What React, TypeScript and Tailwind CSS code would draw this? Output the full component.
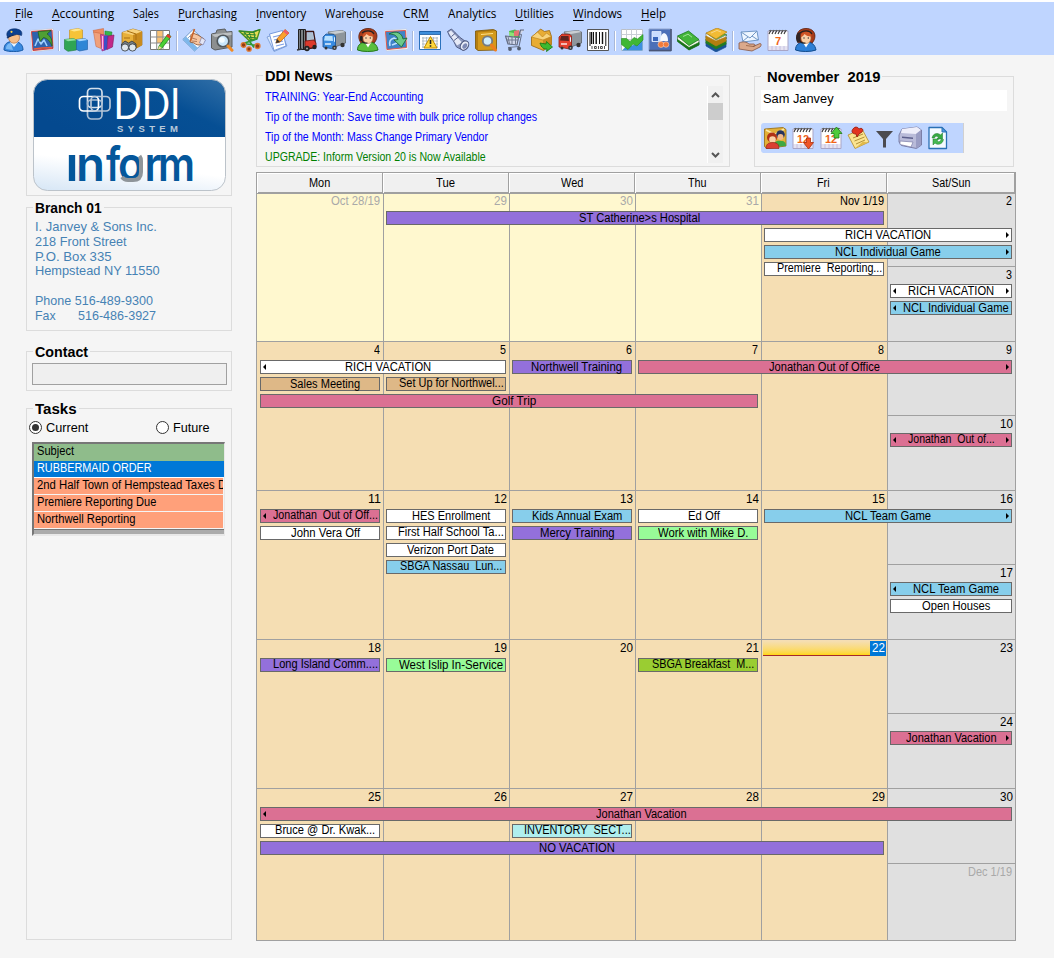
import React, { useLayoutEffect, useRef, useState } from 'react';

const SANS = "font-['Liberation_Sans',Arial,sans-serif]";

/** A single line of text condensed or stretched to a set width. */
function Fit({ w, children, className = '' }: { w: number; children: React.ReactNode; className?: string }) {
  const ref = useRef<HTMLSpanElement>(null);
  const [scale, setScale] = useState(1);
  useLayoutEffect(() => {
    const el = ref.current;
    if (el && el.offsetWidth) setScale(w / el.offsetWidth);
  }, [w]);
  return (
    <span className={`block shrink-0 ${className}`} style={{ width: w }}>
      <span ref={ref} className="inline-block origin-left whitespace-pre" style={{ transform: `scaleX(${scale})` }}>
        {children}
      </span>
    </span>
  );
}

/* ---------- icons ---------- */

function Svg({ children }: { children: React.ReactNode }) {
  return (
    <svg width="24" height="24" viewBox="0 0 24 24" className="block shrink-0" strokeLinejoin="round">
      {children}
    </svg>
  );
}

const Officer = () => (
  <Svg>
    <path d="M2 22c0-6 3-8.500 9-8.500s10 2.500 10 8.500c-4 2-14 2.300-19 0z" fill="#3b8ae0" stroke="#175aa8" />
    <path d="M4 21c0-4 2-5.500 5-6l2 7z" fill="#79b9f5" />
    <path d="M8 14l4 5 4-5z" fill="#e8f4ff" />
    <ellipse cx="12" cy="9.500" rx="5.500" ry="5.700" fill="#f7bd86" stroke="#b9713c" strokeWidth=".7" />
    <path d="M5.500 9C3.500 5 6 1 12 .8c6 0 9 2.700 7.500 6.700-5-2-9-1-14 1.500z" fill="#0d4190" stroke="#082c66" strokeWidth=".6" />
    <path d="M4.500 9.800c3-2.500 7-3.500 10-2.800-3 .5-6.500 1.500-9 3.500z" fill="#0a2a60" />
    <circle cx="9.500" cy="3.800" r="1.100" fill="#ffd24a" />
  </Svg>
);
const ChartBack = () => (
  <Svg>
    <path d="M0 2.500L23 .5l1 21L2 24z" fill="#fff" stroke="#bfc6d2" strokeWidth=".6" />
    <path d="M1.500 3.500L22 2l1 18.500L3 22.500z" fill="#2d62ae" stroke="#d7423e" strokeWidth="1" />
    <path d="M5 18l3-7 3 5 3-4 3 6" fill="none" stroke="#9ed0ff" strokeWidth="1.600" />
    <path d="M4 21l8-1 10-.5" stroke="#ef5a3a" strokeWidth="1.400" />
    <path d="M8 3.500l13-1-4 3.500c4 2.500 5.500 6 5 12-2-5-4.500-7.500-8.500-8.500l-3.500 4z" fill="#4f9f35" stroke="#23611a" strokeWidth=".8" />
  </Svg>
);
const Cubes = () => (
  <Svg>
    <path d="M5.500 2L14 .5 18.500 2v9.500l-8 1.500-5-1z" fill="#f6c338" stroke="#c28c15" strokeWidth=".6" />
    <path d="M5.500 2L14 .5 18.500 2l-8.500 1.500z" fill="#ffe68a" />
    <path d="M.5 11.500l9-1 3 1.800V22l-8.500 1.300L.5 21z" fill="#2fa554" stroke="#1c7838" strokeWidth=".6" />
    <path d="M.5 11.500l9-1 3 1.800-8.500 1z" fill="#8be0a0" />
    <path d="M12.500 11.500l8-1 3 1.500v9.500l-8 1.500-3-1.500z" fill="#2f86d6" stroke="#1b5ba3" strokeWidth=".6" />
    <path d="M12.500 11.500l8-1 3 1.500-8 1.300z" fill="#a5d6ff" />
  </Svg>
);
const Folders = () => (
  <Svg>
    <path d="M1 2.500l10.500-2 .5 6-8 2z" fill="#ee8d62" stroke="#c66038" strokeWidth=".5" />
    <path d="M1.500 4l7.500 1.500v15L4 18.500z" fill="#f0a07b" stroke="#c66038" strokeWidth=".5" />
    <path d="M13 3l7 1-1 8-6-2z" fill="#35b84a" stroke="#1d7a2d" strokeWidth=".5" />
    <path d="M8.500 6.500l7 1-1 14-4.500 1.500z" fill="#d94fa8" stroke="#8f2072" strokeWidth=".6" />
    <path d="M12 8l4-.5L15 21l-3 1.500z" fill="#3a4fc7" />
    <path d="M16 8l6-1-1.500 12-5.500 2.500z" fill="#c22889" stroke="#7d1a5c" strokeWidth=".6" />
    <path d="M10.500 8v13" stroke="#ffb6e6" />
  </Svg>
);
const BoxBinoculars = () => (
  <Svg>
    <path d="M2 4.500l11-3.500 9 2.500V17l-9 5-11-5z" fill="#e8b03a" stroke="#9c6a12" strokeWidth=".7" />
    <path d="M2 4.500L13 1l9 2.500-9 3.500z" fill="#f7d27d" />
    <path d="M13 7l9-3.500V17l-9 5z" fill="#c98b1f" />
    <path d="M7 3l9 3V12M4 10h6" stroke="#a96f10" fill="none" />
    <g fill="#777f86" stroke="#2f3539" strokeWidth=".8">
      <path d="M1.500 16l3.500-3 3.500 2 3.500-2 4 3v4l-7 1-7.500-1z" />
      <circle cx="5" cy="19.500" r="3.600" fill="#dfe7ed" />
      <circle cx="12.500" cy="19.500" r="3.600" fill="#dfe7ed" />
    </g>
  </Svg>
);
const GridPencil = () => (
  <Svg>
    <path d="M2.500 2.500h19v19h-19z" fill="#fff" stroke="#777" />
    <path d="M9 3h6v12H9z" fill="#f8c277" />
    <path d="M2.500 9h19M2.500 15h19M8.700 2.500v19M15 2.500v19" stroke="#8d8d8d" />
    <path d="M20 6l3 2.500L14 20l-4 1.800L11 18z" fill="#4bcf35" stroke="#218015" strokeWidth=".8" />
    <path d="M20 6l3 2.500-1.500 2L18 8z" fill="#e33b2c" />
    <path d="M11 18l3 2-4 1.800z" fill="#f7d6a2" />
  </Svg>
);
const HandWriting = () => (
  <Svg>
    <path d="M.8 11.500L11 1.500 23 13 12.500 23z" fill="#fff" stroke="#6f98c8" />
    <path d="M.8 11.500L4 8.500l12 11.500-3.500 3z" fill="#7db7ea" />
    <path d="M6 10l2-2M8.500 13l2-2" stroke="#88a5c6" fill="none" />
    <path d="M9 10c-1-3 .5-5 3-4.500l4 1.500 6 4-2 5.500c-2.500 1-6 .5-8-1.500l-4-1z" fill="#f7c6a0" stroke="#8e5836" strokeWidth=".9" />
    <path d="M10 10l5 1.500M10 13l5 .5" stroke="#a3694a" strokeWidth=".8" />
    <path d="M12.500 1l-4 12" stroke="#c9652b" strokeWidth="1.600" />
    <path d="M19.500 9.500l4 2.500-2.500 5-3.500-2z" fill="#e3e6f5" stroke="#6d6f9c" strokeWidth=".6" />
  </Svg>
);
const CameraSearch = () => (
  <Svg>
    <path d="M1.500 6L6 5l1-3 8-1 1.500 3 5.500-.5V19L5 22l-3.500-2z" fill="#8c8f90" stroke="#5a5d5e" />
    <path d="M1.500 6.500l20-2.300V7L5 9z" fill="#bdc0c1" />
    <circle cx="13" cy="13" r="5.800" fill="#c9e6fb" stroke="#50575c" strokeWidth="1.600" />
    <circle cx="12" cy="12" r="2.800" fill="#f3fbff" />
    <path d="M18 18l4 4.200" stroke="#f08b25" strokeWidth="3" strokeLinecap="round" />
  </Svg>
);
const TrolleyGreen = () => (
  <Svg>
    <path d="M1 3l13 1 8-2.500L19 11l-8 1.500z" fill="#e5dc55" stroke="#4f8f1d" strokeWidth="1.300" />
    <path d="M1 3l13 1.500 8-3M4 6l14 1M7 9l12 1M6 4l7 8M11 4l3 8M16 4l1 7" fill="none" stroke="#2e8730" strokeWidth="1.200" />
    <path d="M19 11L5 15.500l15 2M11 12.500l5 7" fill="none" stroke="#2f9a34" strokeWidth="1.600" />
    <g fill="#8f3b16" stroke="#e07a34" strokeWidth="1.300">
      <circle cx="5.500" cy="17" r="2.300" />
      <circle cx="11" cy="21" r="2.200" />
      <circle cx="19.500" cy="18" r="2.500" />
    </g>
  </Svg>
);
const PaperPencil = () => (
  <Svg>
    <path d="M1 9l14-5 6 14-13 5.500z" fill="#dceafd" stroke="#7497d2" strokeWidth=".8" />
    <path d="M3.500 6l13-3.500L20 18 8 22.500z" fill="#fff" stroke="#6a90d8" strokeWidth=".9" />
    <path d="M7 9l8-2M8 12l8-2M9 15l8-2M10 18l8-2" stroke="#7c9de4" strokeWidth="1.200" />
    <path d="M19 1.500L23 5l-9 9-4 1 1-4z" fill="#f9a12c" stroke="#b45d0f" strokeWidth=".7" />
    <path d="M19 1.500L23 5l-1.800 2-4-3.500z" fill="#ee5c66" />
    <path d="M11 11l3 3-4 1z" fill="#333" />
  </Svg>
);
const Forklift = () => (
  <Svg>
    <path d="M4.500 1.500h7v20h-7z" fill="#8b9095" stroke="#222" />
    <path d="M6.500 2v20M9.500 2v20" stroke="#1b1b1b" strokeWidth="1.300" />
    <path d="M12 3.500h7.500l1.500 9v7l-9 1.500z" fill="none" stroke="#3a1512" strokeWidth="1.400" />
    <path d="M13 5h5.500l1.500 7-7 1z" fill="#aebfd0" />
    <path d="M11 13l9-1 2 3v4l-11 2z" fill="#dc3a2c" stroke="#6b120d" strokeWidth=".8" />
    <circle cx="13" cy="20.500" r="2.700" fill="#222" />
    <circle cx="13" cy="20.500" r="1" fill="#aaa" />
    <circle cx="20.500" cy="19" r="2.200" fill="#222" />
    <path d="M3 22l5-1" stroke="#333" strokeWidth="1.500" />
  </Svg>
);
function Truck({ main, dark, light }: { main: string; dark: string; light: string }) {
  return (
    <Svg>
      <path d="M6 4l14-1.500L23.500 4v11L13 19z" fill="#8e959b" stroke="#5c6267" strokeWidth=".8" />
      <path d="M6 4l14-1.500L23.500 4 13 6z" fill="#c9ced2" />
      <path d="M1 9l3-3 8 .5 1.500 1.500v12l-3 .8L1 19z" fill={main} stroke={dark} strokeWidth=".8" />
      <path d="M3 8h7.500l.5 5-9-.5z" fill={light} />
      <path d="M12 9l1 .5v4l-1 .5z" fill="#dff1ff" />
      <path d="M3 16h6" stroke="#fff" strokeWidth="1.300" />
      <circle cx="12.500" cy="19.800" r="2.300" fill="#333" />
      <circle cx="20.500" cy="17" r="2.200" fill="#333" />
      <circle cx="12.500" cy="19.800" r=".9" fill="#aaa" />
      <circle cx="4" cy="20" r="1.500" fill="#333" />
    </Svg>
  );
}
function Agent({ body, dark, phone }: { body: string; dark: string; phone?: boolean }) {
  return (
    <Svg>
      <path d="M5 15C1 10 2 .5 12 .5s11 9.500 6 14.500z" fill="#a83c1a" stroke="#5c1c08" strokeWidth=".8" />
      <path d="M1.500 22c0-5 3-8 10-8s9.500 3 10.500 8c-5 2-15.500 2-20.500 0z" fill={body} stroke={dark} />
      <path d="M8.500 14l3.500 5.500 3.500-5.500z" fill="#fff" />
      <ellipse cx="12" cy="10" rx="5" ry="5.500" fill="#fad0a7" stroke="#a96a3c" strokeWidth=".5" />
      <path d="M6.500 9c0-4 4-5 6-5.500 3 .5 5 2 5 5-4 0-6-1.500-7-2.500-1 2-2.500 3-4 3z" fill="#cf5526" />
      {phone ? (
        <path d="M3.500 5l3-1v9l-3 2c-2-3-2-7 0-10z" fill="#302424" />
      ) : (
        <rect x="4" y="8" width="2.600" height="5" rx="1" fill="#222" />
      )}
      <path d="M5.500 12c1 3 3 3.500 6 3M6 5c3-3 10-3 12 1" fill="none" stroke="#222" strokeWidth="1.100" />
      <circle cx="10" cy="10" r=".7" fill="#333" />
      <circle cx="14.300" cy="10" r=".7" fill="#333" />
    </Svg>
  );
}
const PictureArrow = () => (
  <Svg>
    <path d="M.5 2.500L22.500 1 24 21 2.500 23z" fill="#fff" stroke="#c8ccd5" strokeWidth=".6" />
    <path d="M1.500 3.500l20-1 1 17L3 21.500z" fill="#3f83c8" stroke="#e2574c" />
    <path d="M6 18c-1-4 0-7 4-8l3 2M8 17l5-2" stroke="#bde1ff" fill="none" strokeWidth="1.600" />
    <path d="M5 6c7-4 13-1 14 5l4-1-5.500 9L10 12l4-.5C13 7 9 6 5 6z" fill="#6cc98a" stroke="#1d6a35" strokeWidth=".9" />
  </Svg>
);
const CalendarWarn = () => (
  <Svg>
    <path d="M1.500 3.500h21v18h-21z" fill="#fff" stroke="#2b72bd" />
    <path d="M1.500 3.500h21v3h-21z" fill="#3e8edb" stroke="#1d5b9f" strokeWidth=".8" />
    <path d="M4 10h16M4 13h16M4 16h16M4 19h16M5 9v11M8.500 9v11M12 9v11M15.500 9v11M19 9v11" stroke="#9aa7b3" strokeWidth=".7" />
    <path d="M12.500 8.500L19 20H6z" fill="#ffd83d" stroke="#bf8b00" />
    <path d="M12.500 12v4M12.500 17.200v1.500" stroke="#222" strokeWidth="1.600" />
  </Svg>
);
const Flashlight = () => (
  <Svg>
    <path d="M1.500 3.500l4-2.500 8 8 8 6-4 7.500-7-3.500-3-6-4-5z" fill="#8e9ac0" stroke="#4b557c" strokeWidth=".9" />
    <path d="M2.500 4.500l2.500-2 11 12-5 3z" fill="#e6eaf7" />
    <path d="M5.500 8.500l4-3.500M8 12.500l5-4" stroke="#56618c" />
    <ellipse cx="18.500" cy="17.500" rx="3.800" ry="5" transform="rotate(35 18.500 17.500)" fill="#e9edf8" stroke="#4d587f" strokeWidth="1.100" />
    <ellipse cx="18.800" cy="18" rx="2" ry="3" transform="rotate(35 18.800 18)" fill="#7d89b4" />
  </Svg>
);
const BookSearch = () => (
  <Svg>
    <path d="M1.500 3l18-1.500 3 1.500v19L4 22.500l-2.500-2z" fill="#b57e10" stroke="#7a5404" strokeWidth=".8" />
    <path d="M4 4.500L22 3v18.500L4 22z" fill="#d49a1d" />
    <path d="M7 6.500l12-1" stroke="#ffe08a" />
    <circle cx="13.500" cy="13" r="4.700" fill="#ccecff" stroke="#727b83" strokeWidth="1.800" />
    <path d="M17.500 17l4 5" stroke="#ef7f21" strokeWidth="3" strokeLinecap="round" />
  </Svg>
);
const Cart = () => (
  <Svg>
    <path d="M7 3l6-1.500L18 4v6H8z" fill="#51b852" />
    <path d="M12 3l5-1 1 6h-6z" fill="#e57373" />
    <path d="M7 4l5 1v5H8z" fill="#8de377" />
    <path d="M3.500 8l13 1.500L15 17l-9-1zM16.500 9.500L18.500 2H22" fill="#d3d7e6" fillOpacity=".85" stroke="#626b82" strokeWidth="1.200" />
    <path d="M6 8.500l1.500 7.500M10 9v8M13.500 9.500v7M4.500 12h12M6 19.500l11-1" stroke="#707a91" fill="none" />
    <path d="M17.500 6l2 .5-2.500 12" stroke="#626b82" fill="none" />
    <circle cx="8" cy="21" r="1.900" fill="#555e70" />
    <circle cx="17" cy="20.500" r="1.900" fill="#555e70" />
  </Svg>
);
const BoxArrow = () => (
  <Svg>
    <path d="M1.500 9l6-5 3-3 4 2.500 5-1 2 6v8l-8 6-12-5z" fill="#e8ac35" stroke="#99640d" strokeWidth=".8" />
    <path d="M1.500 9l11.500 3 8.500-3.500-5-3.500-4 4-5-5z" fill="#f8d37c" stroke="#b57c19" strokeWidth=".6" />
    <path d="M13 12v10.500l8.500-5.500V8.500z" fill="#c88a20" />
    <path d="M10 15l6 1 .5-2.500L22.500 19l-6 4.500.5-2.500c-3 .5-6-1.500-7-6z" fill="#3cb930" stroke="#167312" strokeWidth=".8" />
  </Svg>
);
const Barcode = () => (
  <Svg>
    <path d="M1.500 1.500h21v21h-21z" fill="#fff" stroke="#555" />
    <path d="M4 4v14M7.500 4v12M13.500 4v12M19.800 4v14" stroke="#111" strokeWidth="1" />
    <path d="M5.600 4v12M10.200 4v12M16.500 4v12" stroke="#111" strokeWidth="1.400" />
    <path d="M6 18v3M8.500 18.500h1.800v2H8.500zM12.500 18v3M14.500 18.500h1.800v2h-1.800zM18.500 18v3" stroke="#222" fill="none" strokeWidth=".8" />
  </Svg>
);
const AreaChart = () => (
  <Svg>
    <path d="M1.500 1.500h21v21h-21z" fill="#fff" stroke="#bbc0c8" />
    <path d="M1.500 6.500h21M1.500 11.500h21M6.500 1.500v15M11.500 1.500v15M16.500 1.500v15" stroke="#c9ced5" />
    <path d="M2 22.500l4-4 6-1 5-2 5.500-5v12z" fill="#3d8fe0" />
    <path d="M1.500 10.500h5l3.500 3 4-4 3.500 1.500L23 6.500V12l-6 6-4-2-5 5.500-6.500-5z" fill="#3fb735" stroke="#238c1e" strokeWidth=".6" />
  </Svg>
);
const PhotoTile = () => (
  <Svg>
    <path d="M1 1h22v22H1z" fill="#4c6fb8" stroke="#8ea3cc" />
    <path d="M1 22.500h22V1" fill="none" stroke="#4a5575" strokeWidth="1.600" />
    <path d="M4 3.500h9v10H4z" fill="#c9dcff" stroke="#e3ecff" strokeWidth=".8" />
    <path d="M5 9h5v4H5z" fill="#3a66bb" />
    <path d="M12.500 13c0-5 1-7 3.500-8 3 1 4 4 4 8z" fill="#f5f8ff" />
    <circle cx="13" cy="16.500" r="3" fill="#f0793a" stroke="#fbd3bd" strokeWidth=".6" />
    <circle cx="18" cy="16.500" r="2.800" fill="#f0793a" stroke="#fbd3bd" strokeWidth=".6" />
  </Svg>
);
function BookShape({ y, a, b }: { y: number; a: string; b: string }) {
  return (
    <g transform={`translate(0 ${y})`} strokeWidth=".7">
      <path d="M2 7v5l10 6 10-5V9L12 14z" fill="#f8f9ef" stroke="#7b7b68" />
      <path d="M2 10l10 5 10-4v4l-10 5-10-6z" fill={b} stroke={b} />
      <path d="M2 7l11-5 10 4-11 7z" fill={a} stroke={b} />
      <path d="M7 7l6-2.600 4 1.600" stroke="#fff" strokeOpacity=".6" fill="none" />
    </g>
  );
}
const GreenBook = () => (
  <Svg>
    <g strokeWidth=".8">
      <path d="M1.500 8.500v4L13 21.500l10-5v-4.500z" fill="#f4f6e8" stroke="#5f7a50" />
      <path d="M1.500 11.500L13 19.500l10-5v2.500L13 22 1.500 13.500z" fill="#187218" stroke="#187218" />
      <path d="M1.500 8L12.500 3 23 11.500 13 17.500z" fill="#43b53a" stroke="#1b7a1d" />
      <path d="M7 8.500l5-2.300 4 3" stroke="#b7eeb0" fill="none" />
    </g>
  </Svg>
);
const BookStack = () => (
  <Svg>
    <BookShape y={4} a="#3f8ad3" b="#1a5297" />
    <BookShape y={1} a="#5cb848" b="#237c22" />
    <BookShape y={-2} a="#f2bb35" b="#b57e10" />
  </Svg>
);
const MailHand = () => (
  <Svg>
    <path d="M3 4l16-1 1.500 9L5 14z" fill="#eef6ff" stroke="#7197c5" />
    <path d="M3 4l9 6 7-7M5 13l5-4M20 12l-6-4" fill="none" stroke="#7197c5" />
    <path d="M1 15c4-2 8-1 10 1h5c2 1 1 2.500-1 2.500l7-3c1.500 0 1.500 2 0 3.500l-8 4-13-2z" fill="#dba98b" stroke="#855744" strokeWidth=".8" />
    <path d="M8 17.500l7 1" stroke="#a46f50" />
  </Svg>
);
function CalPage({ arrow, text }: { arrow?: 'down' | 'up'; text: string }) {
  return (
    <Svg>
      <path d="M2 3h20v19.500H2z" fill="#fff" stroke="#a9a5c5" />
      <path d="M2 19h20M2 21h20M6 18v4M10 18v4M14 18v4M18 18v4" stroke="#bdb8dc" strokeWidth=".8" />
      <path d="M3 6l2-4M6 6l2-4M9 6l2-4M12 6l2-4M15 6l2-4M18 6l2-4" stroke="#333" strokeWidth="1.100" />
      <path d="M3 2.500h18" stroke="#666" strokeWidth=".8" />
      <text x="12" y="17" textAnchor="middle" className="font-['Liberation_Sans',sans-serif] text-[11px] font-bold" fill="#f06418">
        {text}
      </text>
      {arrow === 'down' && <path d="M15.500 12h4v4.500h3l-5 6.500-5-6.500h3z" fill="#ef5426" stroke="#a92e0d" strokeWidth=".8" />}
      {arrow === 'up' && <path d="M15 12h5V7.500h3L17.500 1 12 7.500h3z" fill="#4fcb3b" stroke="#1c7d15" strokeWidth=".8" />}
    </Svg>
  );
}
const People = () => (
  <Svg>
    <path d="M1.500 3L20 1.500l3 2V20L4 22.500l-2.500-2z" fill="#e2b13a" stroke="#94690e" strokeWidth=".8" />
    <path d="M3 4l9 4.500L21 3" fill="none" stroke="#fbe9a9" strokeWidth="1.600" />
    <circle cx="17.500" cy="8.500" r="4.300" fill="#26335e" />
    <circle cx="17.500" cy="11" r="3" fill="#f1b98a" />
    <path d="M10 21c0-4 3-7 8-6 4 0 5 2 5 5z" fill="#3fa842" />
    <circle cx="9" cy="11.500" r="5" fill="#b13216" />
    <circle cx="9.500" cy="13.500" r="3.300" fill="#fad1a6" />
    <path d="M3 22.500c0-4 2-6 7-6s6 3 6 6z" fill="#db3f32" stroke="#8c1d14" strokeWidth=".6" />
  </Svg>
);
const NotePin = () => (
  <Svg>
    <path d="M1 9l14-6 7 13-14 6.500z" fill="#fbe490" stroke="#b28c2b" strokeWidth=".8" />
    <path d="M6 12l10-4M7.500 15l10-4M9 18l9-4" stroke="#b09038" />
    <path d="M8 22.500l14-6.500-2 .5-4-1z" fill="#e1b94a" />
    <path d="M6 3c2-3 5-2 6 0 3-2 5 1 3 3l-3 2-2 3-1-3C5 8 4 5 6 3z" fill="#e23420" stroke="#8e160b" strokeWidth=".8" />
  </Svg>
);
const Funnel = () => (
  <svg width="19" height="24" viewBox="0 0 19 24" className="block shrink-0">
    <path d="M1 5h17l-7 8v8.500H8V13z" fill="#4b4b50" />
  </svg>
);
const Printer = () => (
  <Svg>
    <path d="M4 3l15-2 4.500 3v15l-5 3.500-15-3L1 16V9z" fill="#b9bbd9" stroke="#74769f" strokeWidth=".9" />
    <path d="M4 3l15-2 4 3-5 4-15-1z" fill="#eeeefa" />
    <path d="M18 8l5-4v15l-5 3.500z" fill="#9a9dc4" />
    <path d="M4 10.500l11 1v1.500L4 12z" fill="#5c5f8c" />
    <path d="M2 15l13 1-2 5-11-2.500z" fill="#fff" stroke="#7a7ca8" strokeWidth=".7" />
  </Svg>
);
const RefreshPage = () => (
  <Svg>
    <path d="M3 1.500h13l4.500 4.500v16.500H3z" fill="#f4faff" stroke="#2a70b5" strokeWidth="1.300" />
    <path d="M16 1.500V6h4.500z" fill="#4e9be0" stroke="#2a70b5" />
    <path d="M6 12c1-5 6-5.500 8.500-3L16.500 7v6H11l1.500-2C10.500 9.500 9 10 8.500 12z" fill="#37aa44" stroke="#1c7a2a" strokeWidth=".5" />
    <path d="M17.500 13.500c-1 5-6 6-8.500 3.500L7 19v-6h5.500L11 15c2 1.500 3.500.5 4-1.500z" fill="#45b952" stroke="#1c7a2a" strokeWidth=".5" />
  </Svg>
);

/* ---------- top bars ---------- */

const MENU: [string, string, string, number][] = [
  ['', 'F', 'ile', 18],
  ['', 'A', 'ccounting', 62],
  ['Sa', 'l', 'es', 26],
  ['', 'P', 'urchasing', 59],
  ['', 'I', 'nventory', 50],
  ['Wareh', 'o', 'use', 59],
  ['CR', 'M', '', 26],
  ['Analytics', '', '', 48],
  ['', 'U', 'tilities', 39],
  ['', 'W', 'indows', 49],
  ['', 'H', 'elp', 25],
];

const TOOLS: React.ReactNode[][] = [
  [<Officer />, <ChartBack />],
  [<Cubes />, <Folders />, <BoxBinoculars />, <GridPencil />],
  [<HandWriting />, <CameraSearch />, <TrolleyGreen />, <PaperPencil />, <Forklift />, <Truck main="#398be0" dark="#174f91" light="#b8e0ff" />],
  [<Agent body="#5abf3c" dark="#23761a" />, <PictureArrow />],
  [<CalendarWarn />, <Flashlight />, <BookSearch />, <Cart />, <BoxArrow />, <Truck main="#e5402c" dark="#8c1b10" light="#5d2320" />, <Barcode />],
  [<AreaChart />, <PhotoTile />, <GreenBook />, <BookStack />],
  [<MailHand />, <CalPage text="7" />, <Agent body="#2d7fd6" dark="#124b8c" phone />],
];

function TopBar() {
  return (
    <header className="mt-[2px] h-[53px] bg-[#bfd5ff]">
      <nav className="flex h-[24px] items-center gap-[19px] pl-[15px] font-['Open_Sans','Noto_Sans',sans-serif] text-[12px] leading-[24px] text-black">
        {MENU.map(([a, u, b, w]) => (
          <Fit key={a + u + b} w={w}>
            {a}
            <span className="underline decoration-1 underline-offset-2">{u}</span>
            {b}
          </Fit>
        ))}
      </nav>
      <div className="flex pl-[2px] pt-[2px]">
        {TOOLS.map((group, i) => (
          <div key={i} className="flex">
            {i > 0 && <div className="mr-[4px] mt-[3px] h-[20px] w-[2px] border-l border-[#a8b8d8] bg-white" />}
            {group.map((icon, j) => (
              <div key={j} className="w-[28px]">
                {icon}
              </div>
            ))}
          </div>
        ))}
      </div>
    </header>
  );
}

/* ---------- left column ---------- */

function Group({ title, w, className, children }: { title: string; w: number; className: string; children: React.ReactNode }) {
  return (
    <fieldset className={`min-w-0 border border-[#dcdcdc] ${className}`}>
      <legend className="ml-[6px] h-[15px] px-[2px] text-[14px] font-bold leading-[16px] text-black">
        <Fit w={w}>{title}</Fit>
      </legend>
      {children}
    </fieldset>
  );
}

/* letter, left edge, advance */
const WORDMARK: [string, number, number][] = [
  ['i', 32.5, 13],
  ['n', 43, 29],
  ['f', 73, 15],
  ['o', 85, 26],
  ['r', 111.500, 17],
  ['m', 125, 37],
];

function Logo() {
  return (
    <div className="flex h-[123px] w-[206px] border border-[#dcdcdc] pl-[6px] pt-[5px]">
      <svg width="194" height="113" viewBox="0 0 194 113" className="overflow-visible">
        <defs>
          <linearGradient id="navy" x1="0" y1="0.600" x2="1" y2="0">
            <stop offset="0" stopColor="#04498f" />
            <stop offset="0.600" stopColor="#064f94" />
            <stop offset="1" stopColor="#3270a8" />
          </linearGradient>
          <linearGradient id="frost" x1="0" y1="1" x2="0.250" y2="0.400">
            <stop offset="0" stopColor="#d3e4f5" />
            <stop offset="1" stopColor="#fff" />
          </linearGradient>
          <clipPath id="plate">
            <rect x="0.500" y="0.500" width="192" height="111" rx="14" />
          </clipPath>
        </defs>
        <g clipPath="url(#plate)">
          <rect width="194" height="58" fill="url(#navy)" />
          <rect y="58" width="194" height="56" fill="url(#frost)" />
        </g>
        <rect x="0.500" y="0.500" width="192" height="111" rx="14" fill="none" stroke="#bcc3ca" />
        <g fill="none" strokeWidth="1.700">
          <rect x="54.500" y="9.500" width="14.500" height="19" rx="4" stroke="#d3dfeb" />
          <rect x="54.500" y="21" width="14.500" height="19" rx="4" stroke="#a9bdd2" />
          <rect x="46.500" y="17.500" width="19" height="14.500" rx="4" stroke="#fff" />
          <rect x="58" y="17.500" width="19" height="14.500" rx="4" stroke="#b6c6d8" />
        </g>
        <text x="80.500" y="40" textLength="67" lengthAdjust="spacingAndGlyphs" className="font-['Lato',sans-serif] text-[43px] font-normal" fill="#fff">
          DDI
        </text>
        <text x="84" y="53" textLength="61" lengthAdjust="spacing" className="font-['Liberation_Sans',sans-serif] text-[9.500px] font-bold" fill="#b9c9da">
          SYSTEM
        </text>
        <text y="102" className="font-['Inter',sans-serif] text-[48px] font-semibold" fill="#04579b">
          {WORDMARK.map(([c, x, len]) => (
            <tspan key={c} x={x} textLength={len} lengthAdjust="spacingAndGlyphs">
              {c}
            </tspan>
          ))}
        </text>
        <rect x="33" y="60" width="11" height="14" fill="#fff" />
        <path d="M106.500 77q1.500 2 1.500 5v11q0 8-8 8h-5q-4 0-6-3" fill="none" stroke="#8f959a" strokeWidth="4" />
      </svg>
    </div>
  );
}

const ADDRESS: [string, number][] = [
  ['I. Janvey & Sons Inc.', 122],
  ['218 Front Street', 92],
  ['P.O. Box 335', 77],
  ['Hempstead NY 11550', 125],
  ['', 0],
  ['Phone 516-489-9300', 118],
];

function Radio({ on, label, w }: { on?: boolean; label: string; w: number }) {
  return (
    <label className="flex items-center gap-[4px] text-[13px] leading-[15px]">
      <span className="flex size-[13px] items-center justify-center rounded-full border border-[#333] bg-white">
        {on && <span className="size-[7px] rounded-full bg-[#333]" />}
      </span>
      <Fit w={w}>{label}</Fit>
    </label>
  );
}

const TASKS: [string, number][] = [
  ['2nd Half Town of Hempstead Taxes Due', 202],
  ['Premiere Reporting Due', 119],
  ['Northwell Reporting', 98],
];

function Sidebar() {
  return (
    <aside className="flex w-[206px] flex-col">
      <Logo />
      <Group title="Branch 01" w={67} className="mt-[4px] h-[131px]">
        <div className="pl-[8px] pt-[5px] text-[13.500px] leading-[14.800px] text-[#4682b4]">
          {ADDRESS.map(([t, w], i) => (
            <div key={i} className="h-[14.800px]">{t && <Fit w={w}>{t}</Fit>}</div>
          ))}
          <div className="flex">
            <Fit w={21} className="mr-[22px]">Fax</Fit>
            <Fit w={78}>516-486-3927</Fit>
          </div>
        </div>
      </Group>
      <Group title="Contact" w={53} className="mt-[13px] h-[47px]">
        <div className="ml-[5px] mt-[4px] h-[22px] w-[195px] border border-[#a0a0a0] bg-[#efefef]" />
      </Group>
      <Group title="Tasks" w={42} className="mt-[10px] h-[539px]">
        <div className="flex justify-between pl-[2px] pr-[21px] pt-[4px]">
          <Radio on label="Current" w={42} />
          <Radio label="Future" w={37} />
        </div>
        <div className="ml-[5px] mt-[7px] w-[193px] border-b-2 border-l-2 border-r border-t-2 border-b-[#e8e8e8] border-l-[#777] border-r-[#e8e8e8] border-t-[#777] text-[12px] leading-[15px] text-black">
          <div className="h-[17px] bg-[#8fbc8b] pl-[3px]"><Fit w={37}>Subject</Fit></div>
          <div className="h-[17px] border-b border-white bg-[#0078d7] pl-[3px] text-white"><Fit w={115}>RUBBERMAID ORDER</Fit></div>
          {TASKS.map(([t, w]) => (
            <div key={t} className="h-[17px] overflow-hidden border-b border-r border-[#f5f5f5] bg-[#ffa07a] pl-[3px]">
              <Fit w={w}>{t}</Fit>
            </div>
          ))}
          <div className="h-[5px] border-t border-[#777] bg-[#ababab]" />
        </div>
      </Group>
    </aside>
  );
}

/* ---------- news and month panels ---------- */

const NEWS: [string, number, string][] = [
  ['TRAINING: Year-End Accounting', 158, 'text-[#0000ff]'],
  ['Tip of the month: Save time with bulk price rollup changes', 272, 'text-[#0000ff]'],
  ['Tip of the Month: Mass Change Primary Vendor', 223, 'text-[#0000ff]'],
  ['UPGRADE: Inform Version 20 is Now Available', 221, 'text-[#008000]'],
];

function News() {
  return (
    <Group title="DDI News" w={68} className="h-[99px] w-[474px]">
      <div className="flex justify-between pl-[8px] pr-[6px]">
        <ul className="pt-[4px] text-[12px] leading-[20px]">
          {NEWS.map(([t, w, c]) => (
            <li key={t} className={`h-[20px] ${c}`}><Fit w={w}>{t}</Fit></li>
          ))}
        </ul>
        <div className="mt-[3px] flex h-[77px] w-[16px] flex-col items-center border-l border-white bg-[#f0f0f0]">
          <svg width="15" height="17" viewBox="0 0 15 17" fill="none" stroke="#555" strokeWidth="2"><path d="M4 11l3.500-3.500L11 11" /></svg>
          <div className="h-[17px] w-[15px] bg-[#cdcdcd]" />
          <div className="grow" />
          <svg width="15" height="17" viewBox="0 0 15 17" fill="none" stroke="#555" strokeWidth="2"><path d="M4 7l3.500 3.500L11 7" /></svg>
        </div>
      </div>
    </Group>
  );
}

function MonthPanel() {
  return (
    <Group title="November  2019" w={113} className="mt-px h-[98px] w-[260px] [&>legend]:ml-[6px] [&>legend]:pl-[6px]">
      <div className="ml-[6px] mt-[6px] h-[21px] w-[246px] bg-white pl-[2px] text-[13px] leading-[17px]">
        <Fit w={71}>Sam Janvey</Fit>
      </div>
      <div className="ml-[6px] mt-[12px] flex h-[30px] w-[203px] items-center gap-[4px] rounded-l-[3px] border-r border-[#d0d0d0] bg-[#bfd5ff] pl-[2px]">
        <People />
        <CalPage text="12" arrow="down" />
        <CalPage text="12" arrow="up" />
        <NotePin />
        <Funnel />
        <Printer />
        <RefreshPage />
      </div>
    </Group>
  );
}

/* ---------- calendar ---------- */

type Ev = {
  col: number;
  row: number;
  span?: number;
  bg: string;
  text: string;
  x: number;
  w: number;
  l?: boolean;
  r?: boolean;
};
type Week = { days: string[]; events: Ev[]; sunday: Ev[] };

const PURPLE = 'bg-[#9370db]';
const WHITE = 'bg-white';
const SKY = 'bg-[#87ceeb]';
const ROSE = 'bg-[#db7093]';
const WOOD = 'bg-[#deb887]';
const MINT = 'bg-[#98fb98]';
const LIME = 'bg-[#9acd32]';
const AQUA = 'bg-[#afeeee]';

/* x is the offset of the caption from the left edge of its bar */
const WEEKS: Week[] = [
  {
    days: ['Oct 28/19', '29', '30', '31', 'Nov 1/19', '2', '3'],
    events: [
      { col: 2, row: 1, span: 4, bg: PURPLE, text: 'ST Catherine>s Hospital', x: 193, w: 121 },
      { col: 5, row: 2, span: 2, bg: WHITE, text: 'RICH VACATION', x: 81, w: 86, r: true },
      { col: 5, row: 3, span: 2, bg: SKY, text: 'NCL Individual Game', x: 71, w: 106, r: true },
      { col: 5, row: 4, bg: WHITE, text: 'Premiere  Reporting...', x: 13, w: 105 },
    ],
    sunday: [
      { col: 1, row: 1, bg: WHITE, text: 'RICH VACATION', x: 18, w: 86, l: true, r: true },
      { col: 1, row: 2, bg: SKY, text: 'NCL Individual Game', x: 13, w: 106, l: true },
    ],
  },
  {
    days: ['4', '5', '6', '7', '8', '9', '10'],
    events: [
      { col: 1, row: 1, span: 2, bg: WHITE, text: 'RICH VACATION', x: 85, w: 86, l: true },
      { col: 1, row: 2, bg: WOOD, text: 'Sales Meeting', x: 30, w: 70 },
      { col: 2, row: 2, bg: WOOD, text: 'Set Up for Northwel...', x: 13, w: 105 },
      { col: 3, row: 1, bg: PURPLE, text: 'Northwell Training', x: 19, w: 91 },
      { col: 1, row: 3, span: 4, bg: ROSE, text: 'Golf Trip', x: 232, w: 44 },
      { col: 4, row: 1, span: 3, bg: ROSE, text: 'Jonathan Out of Office', x: 131, w: 111, r: true },
    ],
    sunday: [{ col: 1, row: 1, bg: ROSE, text: 'Jonathan  Out of...', x: 18, w: 87, l: true, r: true }],
  },
  {
    days: ['11', '12', '13', '14', '15', '16', '17'],
    events: [
      { col: 1, row: 1, bg: ROSE, text: 'Jonathan  Out of Off...', x: 13, w: 105, l: true },
      { col: 1, row: 2, bg: WHITE, text: 'John Vera Off', x: 31, w: 69 },
      { col: 2, row: 1, bg: WHITE, text: 'HES Enrollment', x: 26, w: 78 },
      { col: 2, row: 2, bg: WHITE, text: 'First Half School Ta...', x: 12, w: 106 },
      { col: 2, row: 3, bg: WHITE, text: 'Verizon Port Date', x: 21, w: 87 },
      { col: 2, row: 4, bg: SKY, text: 'SBGA Nassau  Lun...', x: 14, w: 102 },
      { col: 3, row: 1, bg: SKY, text: 'Kids Annual Exam', x: 20, w: 90 },
      { col: 3, row: 2, bg: PURPLE, text: 'Mercy Training', x: 28, w: 75 },
      { col: 4, row: 1, bg: WHITE, text: 'Ed Off', x: 50, w: 32 },
      { col: 4, row: 2, bg: MINT, text: 'Work with Mike D.', x: 20, w: 90 },
      { col: 5, row: 1, span: 2, bg: SKY, text: 'NCL Team Game', x: 81, w: 86, r: true },
    ],
    sunday: [
      { col: 1, row: 1, bg: SKY, text: 'NCL Team Game', x: 23, w: 86, l: true },
      { col: 1, row: 2, bg: WHITE, text: 'Open Houses', x: 32, w: 68 },
    ],
  },
  {
    days: ['18', '19', '20', '21', '22', '23', '24'],
    events: [
      { col: 1, row: 1, bg: PURPLE, text: 'Long Island Comm....', x: 13, w: 105 },
      { col: 2, row: 1, bg: MINT, text: 'West Islip In-Service', x: 13, w: 104 },
      { col: 4, row: 1, bg: LIME, text: 'SBGA Breakfast  M...', x: 14, w: 102 },
    ],
    sunday: [{ col: 1, row: 1, bg: ROSE, text: 'Jonathan Vacation', x: 16, w: 91, r: true }],
  },
  {
    days: ['25', '26', '27', '28', '29', '30', 'Dec 1/19'],
    events: [
      { col: 1, row: 1, span: 6, bg: ROSE, text: 'Jonathan Vacation', x: 336, w: 91, l: true },
      { col: 1, row: 2, bg: WHITE, text: 'Bruce @ Dr. Kwak...', x: 15, w: 100 },
      { col: 3, row: 2, bg: AQUA, text: 'INVENTORY  SECT...', x: 12, w: 107 },
      { col: 1, row: 3, span: 5, bg: PURPLE, text: 'NO VACATION', x: 279, w: 76 },
    ],
    sunday: [],
  },
];

const COL = ['', 'col-start-1', 'col-start-2', 'col-start-3', 'col-start-4', 'col-start-5', 'col-start-6'];
const ROW = ['', 'row-start-1', 'row-start-2', 'row-start-3', 'row-start-4'];

function Bar({ ev, sunday }: { ev: Ev; sunday?: boolean }) {
  const place = sunday ? '' : `${COL[ev.col]} ${ROW[ev.row]}`;
  const raised = ev.text.endsWith('...');
  return (
    <div
      className={`relative h-[14px] border border-[#696969] text-[12px] text-black ${ev.bg} ${place}`}
      style={sunday ? undefined : { gridColumnEnd: ev.col + (ev.span ?? 1) }}
    >
      {ev.l && <svg width="3" height="6" viewBox="0 0 3 6" className="absolute left-[2px] top-[3px]"><path d="M3 0v6L0 3z" /></svg>}
      <div style={{ marginLeft: ev.x - 1 }} className={`h-[12px] ${raised ? 'leading-[10px]' : 'leading-[12px]'}`}>
        <Fit w={ev.w}>{ev.text}</Fit>
      </div>
      {ev.r && <svg width="3" height="6" viewBox="0 0 3 6" className="absolute right-[2px] top-[3px]"><path d="M0 0v6l3-3z" /></svg>}
    </div>
  );
}

function DayLabel({ text, muted }: { text: string; muted: boolean }) {
  const w = text.length === 1 ? 6 : text.length === 2 ? 13 : text.startsWith('Oct') ? 49 : 44;
  const inset = text.length === 2 ? 'pr-[2px]' : 'pr-[3px]';
  return (
    <div className={`flex h-[17px] justify-end text-[12.500px] leading-[17px] ${inset} ${muted ? 'text-[#a9a9a9]' : 'text-black'}`}>
      <Fit w={w}>{text}</Fit>
    </div>
  );
}

function WeekRow({ week, index }: { week: Week; index: number }) {
  const height = index === 0 ? 'h-[148px]' : index === 4 ? 'h-[152px]' : 'h-[149px]';
  const first = index === 0;
  return (
    <div className={`grid border-b border-[#a0a0a0] ${height}`}>
      <div className="col-start-1 row-start-1 grid grid-cols-[127px_126px_126px_126px_126px_127px]">
        {week.days.slice(0, 5).map((d, i) => (
          <div key={d} className={`border-r border-[#a0a0a0] ${first && i < 4 ? 'bg-[#fff8cf]' : 'bg-[#f5deb3]'}`}>
            {d === '22' ? (
              <div className="ml-px mr-px mt-px flex h-[15px] border-b border-[#a52a2a] bg-gradient-to-b from-[#f5deb3] to-[#ffd700]">
                <div className="ml-auto h-[15px] w-[16px] bg-[#0078d7] pl-[2px] text-[12.500px] leading-[15px] text-white"><Fit w={13}>22</Fit></div>
              </div>
            ) : (
              <div className={first ? '-mt-px' : ''}><DayLabel text={d} muted={first && i < 4} /></div>
            )}
          </div>
        ))}
        <div className="flex flex-col bg-[#e0e0e0]">
          <div className={`border-b border-[#a0a0a0] ${first ? 'h-[73px]' : index === 4 ? 'h-[75px]' : 'h-[74px]'}`}>
            <div className={first ? '-mt-px' : ''}><DayLabel text={week.days[5]} muted={false} /></div>
          </div>
          <DayLabel text={week.days[6]} muted={week.days[6].startsWith('Dec')} />
          <div className="flex flex-col gap-[3px] pl-[2px] pr-[3px]">
            {week.sunday.map((ev) => <Bar key={ev.text} ev={ev} sunday />)}
          </div>
        </div>
      </div>
      <div className={`pointer-events-none z-10 col-start-1 row-start-1 grid h-[82px] grid-cols-[120px_120px_120px_120px_120px_122px] grid-rows-[14px_14px_14px_14px] gap-x-[6px] gap-y-[3px] self-start pl-[3px] ${first ? 'pt-[17px]' : 'pt-[18px]'}`}>
        {week.events.map((ev) => <Bar key={ev.text} ev={ev} />)}
      </div>
    </div>
  );
}

const HEADS: [string, number][] = [['Mon', 21], ['Tue', 19], ['Wed', 22], ['Thu', 19], ['Fri', 13], ['Sat/Sun', 38]];

function Calendar() {
  return (
    <section className="mt-[5px] w-[760px] border-l border-r border-t border-[#a0a0a0]">
      <div className="grid h-[21px] grid-cols-[126px_126px_126px_126px_126px_128px] border-b-2 border-[#a0a0a0] bg-[#f0f0f0]">
        {HEADS.map(([t, w]) => (
          <div key={t} className="flex justify-center border-r border-[#a0a0a0] text-[12.500px] leading-[20px] text-black shadow-[inset_1px_1px_0_#fff]">
            <Fit w={w}>{t}</Fit>
          </div>
        ))}
      </div>
      {WEEKS.map((w, i) => <WeekRow key={i} week={w} index={i} />)}
    </section>
  );
}

export default function App() {
  return (
    <div className={`flow-root h-[958px] w-[1054px] overflow-hidden bg-[#f5f5f5] shadow-[inset_0_2px_0_#fff] ${SANS}`}>
      <TopBar />
      <div className="flex gap-[24px] pl-[26px]">
        <div className="pt-[18px]"><Sidebar /></div>
        <main className="pt-[13px]">
          <div className="flex gap-[24px]">
            <News />
            <MonthPanel />
          </div>
          <Calendar />
        </main>
      </div>
    </div>
  );
}
